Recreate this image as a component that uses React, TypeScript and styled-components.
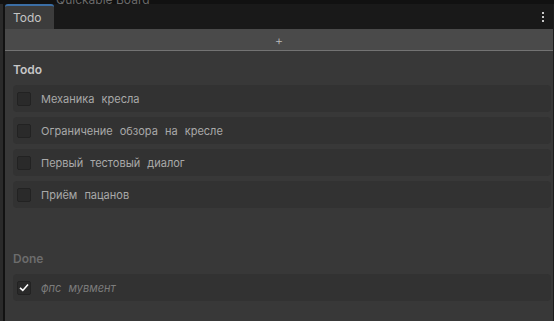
import styled, { createGlobalStyle } from "styled-components";

const GlobalStyle = createGlobalStyle`
  html, body {
    margin: 0;
    padding: 0;
    background: #111111;
  }
  body {
    font-family: Inter, "Open Sans", "Noto Sans", sans-serif;
  }
`;

const Window = styled.div`
  width: 554px;
  height: 321px;
  display: flex;
  flex-direction: column;
  background: #111111;
  overflow: hidden;
`;

// sliver of the window title that is cut off above the panel
const TitleSliver = styled.div`
  height: 4px;
  overflow: hidden;
  padding-left: 56px;
  display: flex;
  align-items: flex-end;
  color: #6a6a6a;
  font-size: 12px;
  line-height: 8px;
  white-space: nowrap;
`;

const Body = styled.div`
  flex: 1;
  display: flex;
  min-height: 0;
`;

const LeftEdge = styled.div`
  width: 3px;
  background: #2a2a2a;
  border-right: 2px solid #121212;
`;

const Panel = styled.div`
  flex: 1;
  display: flex;
  flex-direction: column;
  border-right: 1px solid #1c1c1c;
  min-width: 0;
`;

const TabBar = styled.div`
  height: 25px;
  display: flex;
  align-items: stretch;
  background: #191919;
`;

const Tab = styled.div`
  width: 49px;
  box-sizing: border-box;
  background: #3c3c3c;
  border-top: 2px solid #3b6ea5;
  border-radius: 3px 3px 0 0;
  color: #c4c4c4;
  font-size: 12px;
  padding-left: 8px;
  display: flex;
  align-items: center;
`;

const Spacer = styled.div`
  flex: 1;
`;

const Kebab = styled.div`
  width: 14px;
  display: flex;
  flex-direction: column;
  align-items: center;
  justify-content: center;
  gap: 2px;
  margin-right: 3px;
`;

const Dot = styled.span`
  width: 2px;
  height: 2px;
  background: #c8c8c8;
`;

const AddBar = styled.div`
  height: 21px;
  background: #4a4a4a;
  border-bottom: 1px solid #737373;
  display: flex;
  align-items: center;
  justify-content: center;
  color: #bdbdbd;
  font-size: 13px;
  font-weight: 300;
`;

const Content = styled.div`
  flex: 1;
  background: #383838;
  padding: 9px 2px 0 8px;
  display: flex;
  flex-direction: column;
`;

const SectionTitle = styled.div<{ $dim?: boolean }>`
  font-size: 12px;
  font-weight: 600;
  color: ${(p) => (p.$dim ? "#6c6c6c" : "#c6c6c6")};
  height: 20px;
  line-height: 20px;
  margin-bottom: 5px;
`;

const List = styled.div`
  display: flex;
  flex-direction: column;
  gap: 5px;
`;

const Item = styled.div`
  height: 27px;
  background: #323232;
  border-radius: 4px;
  display: flex;
  align-items: center;
  padding-left: 4px;
  gap: 10px;
`;

const Box = styled.div`
  width: 12px;
  height: 12px;
  background: #2a2a2a;
  border: 1px solid #222222;
  border-radius: 2px;
  display: flex;
  align-items: center;
  justify-content: center;
`;

const Label = styled.span<{ $done?: boolean }>`
  font-size: 11px;
  word-spacing: 4px;
  color: ${(p) => (p.$done ? "#7c7c7c" : "#a9a9a9")};
  font-style: ${(p) => (p.$done ? "italic" : "normal")};
  white-space: nowrap;
`;

const Gap = styled.div`
  height: 41px;
`;

const todo = [
  "Механика кресла",
  "Ограничение обзора на кресле",
  "Первый тестовый диалог",
  "Приём пацанов",
];

export default function App() {
  return (
    <Window>
      <GlobalStyle />
      <TitleSliver>Quickable Board</TitleSliver>
      <Body>
        <LeftEdge />
        <Panel>
          <TabBar>
            <Tab>Todo</Tab>
            <Spacer />
            <Kebab>
              <Dot />
              <Dot />
              <Dot />
            </Kebab>
          </TabBar>
          <AddBar>+</AddBar>
          <Content>
            <SectionTitle>Todo</SectionTitle>
            <List>
              {todo.map((t) => (
                <Item key={t}>
                  <Box />
                  <Label>{t}</Label>
                </Item>
              ))}
            </List>
            <Gap />
            <SectionTitle $dim>Done</SectionTitle>
            <List>
              <Item>
                <Box>
                  <svg width="10" height="9" viewBox="0 0 10 9">
                    <path d="M1 4.8 L3.8 7.4 L9 1.4" fill="none" stroke="#ffffff" strokeWidth="1.6" />
                  </svg>
                </Box>
                <Label $done>фпс мувмент</Label>
              </Item>
            </List>
          </Content>
        </Panel>
      </Body>
    </Window>
  );
}
